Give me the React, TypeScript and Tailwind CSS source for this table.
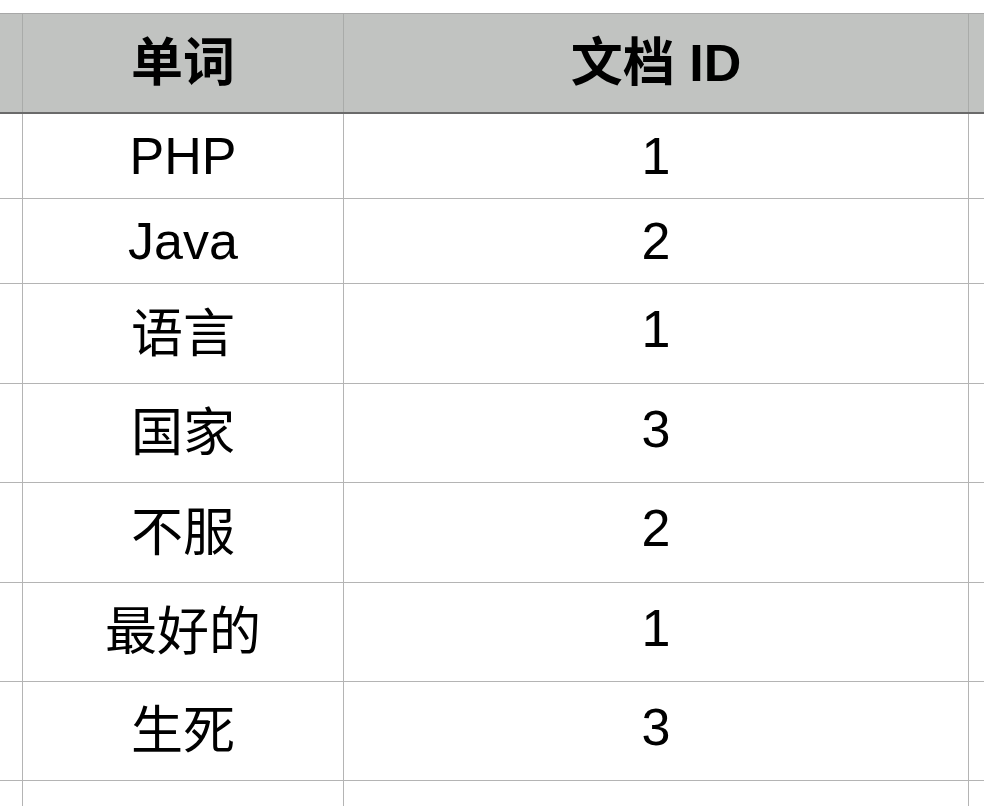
import React from "react";

const rows: { word: string; id: string; h: string; cjk: boolean }[] = [
  { word: "PHP", id: "1", h: "h-[85px]", cjk: false },
  { word: "Java", id: "2", h: "h-[85px]", cjk: false },
  { word: "语言", id: "1", h: "h-[100px]", cjk: true },
  { word: "国家", id: "3", h: "h-[99px]", cjk: true },
  { word: "不服", id: "2", h: "h-[100px]", cjk: true },
  { word: "最好的", id: "1", h: "h-[99px]", cjk: true },
  { word: "生死", id: "3", h: "h-[99px]", cjk: true },
];

const font = {
  fontFamily:
    '"Liberation Sans", Arial, "Noto Sans CJK SC", sans-serif',
};

export default function App() {
  return (
    <div
      className="h-[806px] w-[984px] overflow-hidden bg-white pt-[13px] text-[52px] text-black"
      style={font}
    >
      <div className="grid h-[101px] grid-cols-[23px_321px_625px_1fr] border-t border-b-2 border-t-[#a8a8a8] border-b-[#6a6a6a] bg-[#c1c3c1] font-bold">
        <div className="border-r border-[#a9aba9]" />
        <div className="flex items-center justify-center border-r border-[#a9aba9] leading-none">
          单词
        </div>
        <div className="flex items-center justify-center border-r border-[#a9aba9] leading-none">
          文档 ID
        </div>
        <div />
      </div>
      {rows.map((r, i) => (
        <div
          key={i}
          className={`grid ${r.h} grid-cols-[23px_321px_625px_1fr] border-b border-[#b4b4b4]`}
        >
          <div className="border-r border-[#b4b4b4]" />
          <div className="flex items-center justify-center border-r border-[#b4b4b4] leading-none">
            {r.word}
          </div>
          <div
            className={`flex items-center justify-center border-r border-[#b4b4b4] leading-none ${
              r.cjk ? "pb-[9px]" : "pb-0"
            }`}
          >
            {r.id}
          </div>
          <div />
        </div>
      ))}
      <div className="grid h-[60px] grid-cols-[23px_321px_625px_1fr]">
        <div className="border-r border-[#b4b4b4]" />
        <div className="border-r border-[#b4b4b4]" />
        <div className="border-r border-[#b4b4b4]" />
        <div />
      </div>
    </div>
  );
}
